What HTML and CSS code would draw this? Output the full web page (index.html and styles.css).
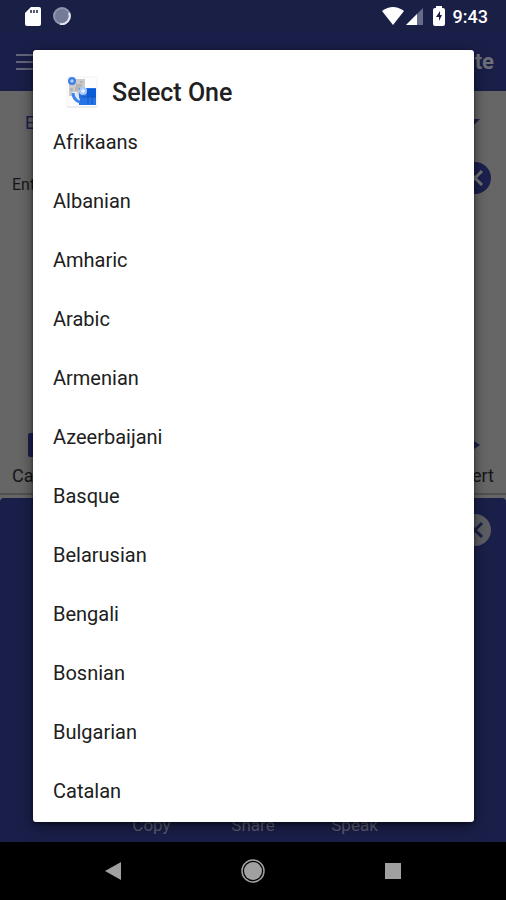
FILE: index.html
```html
<!DOCTYPE html>
<html lang="en">
<head>
<meta charset="utf-8">
<meta name="viewport" content="width=device-width, initial-scale=1">
<title>Select One</title>
<link rel="stylesheet" href="styles.css">
</head>
<body>
<div class="screen">
  <header class="status">
    <svg class="icon-sd" viewBox="0 0 16 19" aria-hidden="true"><path d="M6 0h8a2 2 0 0 1 2 2v15a2 2 0 0 1-2 2H2a2 2 0 0 1-2-2V6z" fill="#fff"/><path d="M6 3v3M9 3v3M12 3v3" stroke="#555a78" stroke-width="2"/></svg>
    <svg class="icon-sync" viewBox="0 0 18 18" aria-hidden="true"><circle cx="9" cy="9" r="8" fill="#737b99" stroke="#8f96ad" stroke-width="2"/><path d="M16 6A8 8 0 0 1 7 17" fill="none" stroke="#e4e6ee" stroke-width="2"/></svg>
    <span class="spacer"></span>
    <svg class="icon-wifi" viewBox="0 0 22 18" aria-hidden="true"><path d="M0 4Q11-4 22 4L11 18z" fill="#fff"/></svg>
    <svg class="icon-signal" viewBox="0 0 17 17" aria-hidden="true"><path d="M17 0v17H0z" fill="#666b8c"/><path d="M11 6v11H0z" fill="#fff"/></svg>
    <svg class="icon-battery" viewBox="0 0 12 20" aria-hidden="true"><path d="M3 2V0h6v2h1a2 2 0 0 1 2 2v14a2 2 0 0 1-2 2H2a2 2 0 0 1-2-2V4a2 2 0 0 1 2-2z" fill="#fff"/><path d="M7 5L3 11h3v4l3-6H7z" fill="#1a1f45"/></svg>
    <time class="clock">9:43</time>
  </header>
  <div class="appbar">
    <svg class="icon-menu" viewBox="0 0 24 16" aria-hidden="true"><path d="M0 1h24M0 8h24M0 15h24" stroke="#62657a" stroke-width="2"/></svg>
    <span class="app-title">te</span>
  </div>
  <main class="panels">
    <section class="source">
      <div class="row languages"><span>E</span><svg class="icon-caret" viewBox="0 0 12 6" aria-hidden="true"><path d="M0 0h12L6 6z" fill="#1a1f4a"/></svg></div>
      <div class="row entry"><span>Ent</span><svg class="icon-clear" viewBox="0 0 32 32" aria-hidden="true"><circle cx="16" cy="16" r="16" fill="#1b204f"/><path d="M9 9l14 14M23 9L9 23" stroke="#747474" stroke-width="3"/></svg></div>
      <div class="row tools"><svg class="icon-camera" viewBox="0 0 24 24" aria-hidden="true"><rect width="24" height="24" rx="2" fill="#1b1f4f"/></svg><svg class="icon-convert" viewBox="0 0 16 16" aria-hidden="true"><path d="M0 7h10V4l6 4-6 4V9H0z" fill="#1b1f4f"/></svg></div>
      <div class="row labels"><span>Ca</span><span>ert</span></div>
    </section>
    <section class="result">
      <svg class="icon-clear" viewBox="0 0 32 32" aria-hidden="true"><circle cx="16" cy="16" r="16" fill="#5d5e64"/><path d="M9 9l14 14M23 9L9 23" stroke="#1a1f4a" stroke-width="3"/></svg>
      <div class="actions"><span>Copy</span><span>Share</span><span>Speak</span></div>
    </section>
  </main>
  <nav class="navbar" aria-label="System">
    <button type="button" aria-label="Back"><svg width="16" height="18" viewBox="0 0 16 18"><path d="M16 0v18L0 9z" fill="#a0a0a0"/></svg></button>
    <button type="button" aria-label="Home"><svg width="24" height="24" viewBox="0 0 24 24"><circle cx="12" cy="12" r="11" fill="none" stroke="#a0a0a0" stroke-width="1.5"/><circle cx="12" cy="12" r="9" fill="#a0a0a0"/></svg></button>
    <button type="button" aria-label="Recents"><svg width="16" height="16" viewBox="0 0 16 16"><path d="M0 0h16v16H0z" fill="#a0a0a0"/></svg></button>
  </nav>
  <div class="dialog" role="dialog" aria-labelledby="dialog-title">
    <div class="dialog-head">
      <svg class="logo" viewBox="0 0 32 32" aria-hidden="true">
        <path d="M1 1h30v30H1z" fill="#fdfdfd" stroke="#f3f3f3"/><path d="M1 31h30" stroke="#e2e2e2"/>
        <path d="M3 3h16v17H3z" fill="#cbcbcb"/>
        <path d="M10 8h6v3h-2v4h-5v-4h1zM4 12h3v3H4zM14 5h3v2h-3z" fill="#b4b4b4"/>
        <circle cx="6" cy="5" r="4" fill="#3f80e8"/><path d="M4 5l2-2 2 2-2 2z" fill="#b7d0f8"/>
        <path d="M13 12h17v17H13z" fill="#2474e8"/>
        <path d="M21 13h9v8h-9z" fill="#0c5bd8"/><path d="M15 21h15M22 16v12M26 21v7" stroke="#1557bd"/>
        <path d="M6 16h5l3 8-2 3c-4-2-6-6-6-11z" fill="#dfe9fa"/>
        <path d="M7 17c0 4 2 7 6 9" fill="none" stroke="#3c83ed" stroke-width="3"/>
        <circle cx="17" cy="15" r="4" fill="#a9cafa"/><path d="M15 15h4M17 13v4" stroke="#fff"/>
      </svg>
      <h1 class="dialog-title" id="dialog-title">Select One</h1>
    </div>
    <ul class="options">
      <li><button type="button">Afrikaans</button></li>
      <li><button type="button">Albanian</button></li>
      <li><button type="button">Amharic</button></li>
      <li><button type="button">Arabic</button></li>
      <li><button type="button">Armenian</button></li>
      <li><button type="button">Azeerbaijani</button></li>
      <li><button type="button">Basque</button></li>
      <li><button type="button">Belarusian</button></li>
      <li><button type="button">Bengali</button></li>
      <li><button type="button">Bosnian</button></li>
      <li><button type="button">Bulgarian</button></li>
      <li><button type="button">Catalan</button></li>
    </ul>
  </div>
</div>
</body>
</html>
```
FILE: styles.css
```css
* { box-sizing: border-box; }
body { margin: 0; font-family: Roboto, "Liberation Sans", sans-serif; background: #000; }
svg { display: block; flex: none; }
button { border: 0; padding: 0; background: none; font: inherit; color: inherit; }

.screen { position: relative; display: flex; flex-direction: column; min-height: 100vh; }

.status { display: flex; align-items: center; height: 32px; padding: 0 18px 0 25px; background: #1a1f45; color: #fff; }
.spacer { flex: 1; }
.icon-sd { width: 16px; height: 19px; }
.icon-sync { width: 18px; height: 18px; margin-left: 12px; }
.icon-wifi { width: 22px; height: 18px; }
.icon-signal { width: 17px; height: 17px; margin-left: 2px; }
.icon-battery { width: 12px; height: 20px; margin: 0 8px 0 10px; }
.clock { font-size: 18px; font-weight: 500; }

.appbar { display: flex; align-items: center; justify-content: space-between; height: 59px; padding: 0 12px 0 16px; background: #1a1f4a; }
.icon-menu { width: 24px; height: 16px; }
.app-title { font-size: 22px; font-weight: 700; color: #6e7077; }

.panels { flex: 1; display: flex; flex-direction: column; background: #666; }
.source { display: flex; flex-direction: column; height: 404px; border-bottom: 2px solid #505050; font-size: 18px; color: #161616; }
.row { display: flex; align-items: center; justify-content: space-between; padding: 0 12px; }
.languages { height: 62px; padding: 0 26px 0 25px; color: #1a1f4a; }
.icon-caret { width: 12px; height: 6px; }
.entry { align-items: flex-end; height: 41px; padding-right: 15px; font-size: 16px; }
.icon-clear { width: 32px; height: 32px; }
.tools { margin-top: auto; padding: 0 26px 0 28px; }
.icon-camera { width: 24px; height: 24px; }
.icon-convert { width: 16px; height: 16px; }
.labels { height: 36px; }

.result { flex: 1; display: flex; flex-direction: column; align-items: flex-end; margin-top: 3px; padding: 16px 15px 6px; border-radius: 4px 4px 0 0; background: #1a1f4a; }
.actions { display: grid; grid-template-columns: repeat(3, 1fr); align-self: center; width: 64%; margin-top: auto; font-size: 17px; line-height: 22px; text-align: center; color: #5b5e70; }

.navbar { display: flex; justify-content: center; height: 58px; background: #000; }
.navbar button { display: grid; place-items: center; width: 140px; }

.dialog { position: absolute; inset: 50px 32px 78px 33px; display: flex; flex-direction: column; overflow: hidden; border-radius: 3px; background: #fff; box-shadow: 0 4px 14px rgba(0, 0, 0, 0.5), 0 1px 3px rgba(0, 0, 0, 0.5); color: #202020; }
.dialog-head { display: flex; align-items: center; gap: 14px; height: 62px; padding: 22px 33px 0; }
.logo { width: 32px; height: 32px; }
.dialog-title { margin: 0; font-size: 25px; font-weight: 500; }
.options { margin: 0; padding: 0; list-style: none; font-size: 20px; }
.options button { display: block; width: 100%; height: 59px; padding: 0 20px; text-align: left; }
```
